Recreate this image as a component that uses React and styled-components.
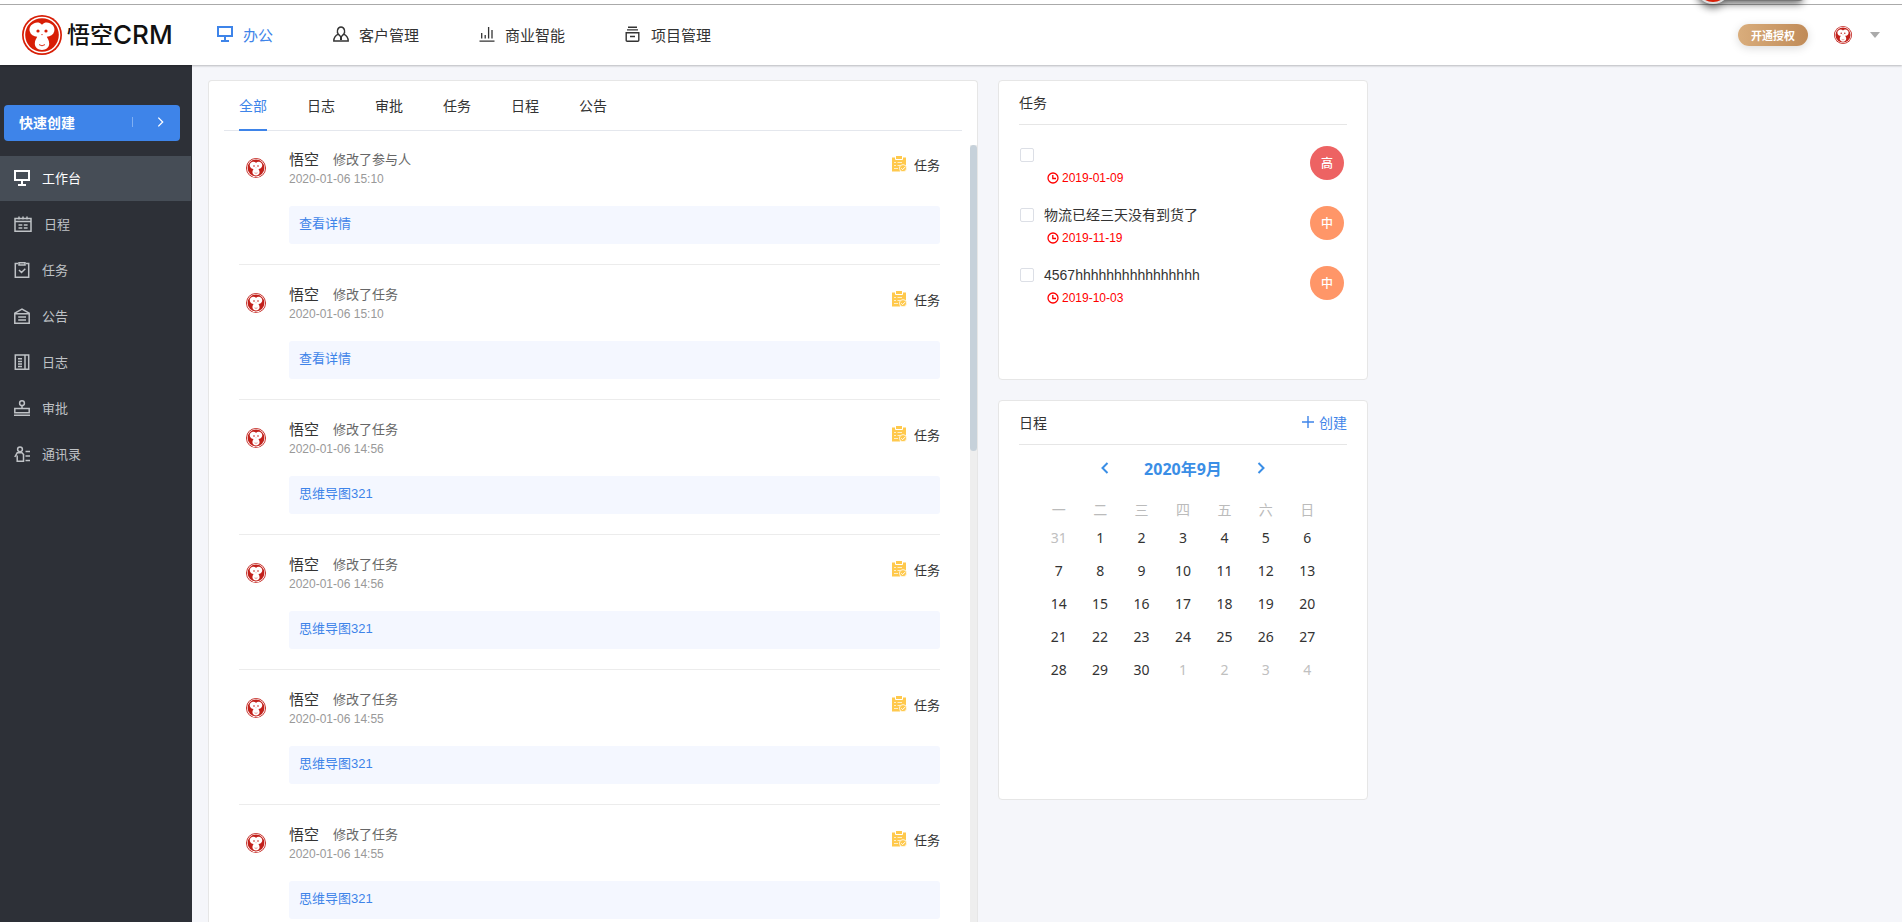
import React, { useState } from 'react';
import styled, { createGlobalStyle } from 'styled-components';

const colors = {
	primary: '#3e84e9',
	dark: '#2d3037',
	active: '#464d56',
	text: '#333',
	sub: '#666',
	muted: '#999',
	line: '#e6e6e6',
	page: '#f5f6fa',
	white: '#fff'
};

const fs = {
	xs: '12px',
	sm: '13px',
	md: '14px',
	lg: '15px',
	xl: '16px'
};

const GlobalStyle = createGlobalStyle`
	*{
		box-sizing: border-box;
		margin: 0;
		padding: 0;
	}
	body{
		background: ${colors.page};
		color: ${colors.text};
		font-family: "Liberation Sans", "Noto Sans CJK SC", sans-serif;
		font-size: ${fs.md};
	}
	button{
		border: none;
		background: none;
		font: inherit;
		color: inherit;
		cursor: pointer;
	}
	a{
		color: inherit;
		text-decoration: none;
	}
	svg{
		display: block;
		flex: none;
	}
`

const Page = styled.div`
	display: flex;
	flex-direction: column;
	height: 100vh;
	overflow: hidden;
`

const Header = styled.header`
	position: relative;
	z-index: 1;
	flex: none;
	display: flex;
	align-items: center;
	height: 61px;
	margin-top: 4px;
	padding: 0 22px;
	background: ${colors.white};
	border-top: 1px solid #aaa;
	box-shadow: 0 -4px 0 ${colors.white}, 0 1px 2px rgba(0, 0, 0, 0.25);
`

const Logo = styled.a`
	display: flex;
	align-items: center;
	width: 195px;
	color: #111;
	line-height: 30px;
	.cn{
		margin-left: 5px;
		font-size: 23px;
		font-weight: 500;
	}
	.en{
		font-family: Inter, "Liberation Sans", sans-serif;
		font-size: 26px;
		font-weight: 500;
	}
`

const TopNav = styled.nav`
	flex: 1;
	display: flex;
	gap: 60px;
	padding-bottom: 2px;
`

const TopLink = styled.a`
	display: flex;
	align-items: center;
	gap: 10px;
	font-size: ${fs.lg};
	color: ${props => props.$active ? colors.primary : colors.text};
	white-space: nowrap;
`

const UserArea = styled.div`
	display: flex;
	align-items: center;
`

const Badge = styled.button`
	width: 70px;
	height: 22px;
	margin-right: 26px;
	border-radius: 11px;
	background: linear-gradient(90deg, #d9ad7c, #c08b58);
	box-shadow: 0 2px 10px rgba(0, 0, 0, 0.15);
	color: ${colors.white};
	font-size: 11px;
	font-weight: bold;
`

const UserMenu = styled.button`
	display: flex;
	align-items: center;
	gap: 18px;
`

const Floating = styled.svg`
	position: absolute;
	top: -5px;
	right: 72px;
`

const Body = styled.div`
	flex: 1;
	display: flex;
	min-height: 0;
`

const SideBar = styled.aside`
	flex: none;
	width: 192px;
	padding-top: 40px;
	background: ${colors.dark};
`

const QuickCreate = styled.button`
	display: flex;
	align-items: center;
	width: 176px;
	height: 36px;
	margin: 0 4px 15px;
	padding: 0 16px 2px 15px;
	border-radius: 4px;
	background: ${colors.primary};
	color: ${colors.white};
	font-weight: bold;
	.label{
		flex: 1;
		text-align: left;
	}
	.split{
		width: 1px;
		height: 10px;
		margin-right: 24px;
		background: #7faff3;
	}
`

const SideLink = styled.a`
	display: flex;
	align-items: center;
	gap: 12px;
	height: 45px;
	margin: 0 1px 1px 0;
	padding: 0 0 2px 14px;
	background: ${props => props.$active ? colors.active : 'transparent'};
	color: ${props => props.$active ? colors.white : '#bfc2c6'};
	font-size: ${fs.sm};
`

const Main = styled.main`
	flex: 1;
	display: grid;
	grid-template-columns: minmax(0, 770px) minmax(0, 370px);
	gap: 20px;
	min-width: 0;
	padding: 15px 15px 0 16px;
`

const Card = styled.section`
	min-height: ${props => props.$tall ? '400px' : '300px'};
	padding: 0 20px;
	background: ${colors.white};
	border: 1px solid ${colors.line};
	border-radius: 4px;
`

const FeedCard = styled.section`
	display: flex;
	flex-direction: column;
	min-height: 0;
	overflow: hidden;
	background: ${colors.white};
	border: 1px solid ${colors.line};
	border-bottom: none;
	border-radius: 4px 4px 0 0;
`

const Tabs = styled.div`
	flex: none;
	display: flex;
	gap: 40px;
	height: 50px;
	margin: 0 15px 14px;
	padding: 0 15px;
	border-bottom: 1px solid #e4e7ed;
`

const Tab = styled.button`
	height: 50px;
	border-bottom: 2px solid ${props => props.$active ? colors.primary : 'transparent'};
	color: ${props => props.$active ? colors.primary : colors.text};
`

const Scroller = styled.div`
	flex: 1;
	display: flex;
	min-height: 0;
`

const FeedList = styled.ul`
	flex: 1;
	min-width: 0;
	padding: 0 30px;
	list-style: none;
	overflow: hidden;
`

const Track = styled.div`
	width: 7px;
	background: #eee;
	.thumb{
		height: 306px;
		border-radius: 4px;
		background: #c6d1da;
	}
`

const FeedItem = styled.li`
	height: 135px;
	padding: 4px 0 0 7px;
	.head{
		display: flex;
		height: 42px;
	}
	.avatar{
		width: 43px;
		padding-top: 9px;
	}
	.who{
		flex: 1;
	}
	.line{
		display: flex;
		align-items: center;
		gap: 14px;
		height: 18px;
	}
	.name{
		font-size: ${fs.lg};
		color: ${colors.text};
	}
	.action{
		font-size: ${fs.sm};
		color: ${colors.sub};
	}
	time{
		display: block;
		font-size: ${fs.xs};
		line-height: 24px;
		color: ${colors.muted};
	}
	.kind{
		display: flex;
		align-items: center;
		gap: 7px;
		height: 30px;
		font-size: ${fs.sm};
	}
`

const Detail = styled.a`
	display: block;
	height: 38px;
	margin: 15px 0 20px 43px;
	padding: 0 10px;
	border-radius: 3px;
	background: #f4f7ff;
	color: ${colors.primary};
	font-size: ${fs.sm};
	line-height: 36px;
`

const Divider = styled.hr`
	margin-left: -7px;
	border: none;
	border-top: 1px solid #ececec;
`

const SideColumn = styled.div`
	display: flex;
	flex-direction: column;
	gap: 20px;
`

const CardHead = styled.header`
	display: flex;
	align-items: center;
	justify-content: space-between;
	height: 44px;
	padding-bottom: 2px;
	border-bottom: 1px solid ${colors.line};
	h2{
		font-size: ${fs.md};
		font-weight: normal;
	}
	button{
		display: flex;
		align-items: center;
		gap: 5px;
		color: ${colors.primary};
	}
`

const TaskList = styled.ul`
	padding-top: 12px;
	list-style: none;
`

const TaskRow = styled.li`
	display: flex;
	align-items: flex-start;
	height: 60px;
	padding: 9px 3px 0 1px;
	input{
		appearance: none;
		width: 14px;
		height: 14px;
		margin-top: 2px;
		border: 1px solid #dcdfe6;
		border-radius: 2px;
		background: ${colors.white};
	}
	input:checked{
		background: ${colors.primary};
	}
	.content{
		flex: 1;
		padding-left: 10px;
	}
	label{
		display: block;
		height: 20px;
		line-height: 18px;
	}
	.due{
		display: flex;
		align-items: center;
		gap: 3px;
		height: 24px;
		padding-left: 3px;
		color: #f00;
		font-size: ${fs.xs};
	}
`

const Level = styled.span`
	display: flex;
	align-items: center;
	justify-content: center;
	width: 34px;
	height: 34px;
	padding-bottom: 2px;
	border-radius: 50%;
	background: ${props => props.$high ? '#ed6363' : '#ff9668'};
	color: ${colors.white};
	font-size: ${fs.xs};
	font-weight: 500;
`

const MonthNav = styled.div`
	display: flex;
	align-items: center;
	justify-content: center;
	gap: 35px;
	height: 46px;
	color: #3a8ee6;
	font-family: "Noto Sans", "Noto Sans CJK SC", sans-serif;
	font-size: ${fs.xl};
	font-weight: bold;
`

const Calendar = styled.table`
	width: 290px;
	max-width: 100%;
	margin: 2px auto 0;
	border-collapse: collapse;
	table-layout: fixed;
	text-align: center;
	font-family: "Noto Sans", "Noto Sans CJK SC", sans-serif;
	font-size: ${fs.md};
	th{
		height: 28px;
		padding-top: 4px;
		color: #bbb;
		font-weight: normal;
	}
	td{
		height: 33px;
	}
	.other{
		color: #c0c0c0;
	}
`

const Monkey = ({ size, color = '#d81e06' }) => (
	<svg width={size} height={size} viewBox="0 0 40 40" aria-hidden="true">
		<circle cx="20" cy="20" r="20" fill={color} />
		<circle cx="20" cy="20" r="18.3" fill="#fff" />
		<circle cx="20" cy="20" r="16.8" fill={color} />
		<path d="M20 9.8C17.8 7.3 14.8 7.2 12.2 8.2C8.5 9.7 6.8 13 7.8 16.6C8.7 20 11.6 21.7 15.2 21.8C14.6 23.2 12.8 25.4 12.8 28.6C12.8 32.6 16 35 20 35C24 35 27.2 32.6 27.2 28.6C27.2 25.4 25.4 23.2 24.8 21.8C28.4 21.7 31.3 20 32.2 16.6C33.2 13 31.5 9.7 27.8 8.2C25.2 7.2 22.2 7.3 20 9.8Z" fill="#fff" />
		<circle cx="16" cy="16" r="1.6" fill={color} />
		<circle cx="24" cy="16" r="1.6" fill={color} />
		<circle cx="20" cy="19.6" r="0.7" fill={color} />
		<path d="M17 29.6Q20 32 23 29.6" fill="none" stroke={color} strokeWidth="0.9" />
	</svg>
)

const Line = ({ w = 16, sw = 1.5, children }) => (
	<svg width={w} height="16" viewBox={`0 0 ${w} 16`} fill="none" stroke="currentColor" strokeWidth={sw} aria-hidden="true">
		{children}
	</svg>
)

const icons = {
	screen: (
		<Line sw={2}><path d="M1 1H15V10H1ZM8 10V15M4 15H12" /></Line>
	),
	customer: (
		<Line sw={1.4}>
			<path d="M5.4 8.2C3.6 6.8 4 1 8 1S12.4 6.8 10.6 8.2C13.5 9.5 15.2 11 15.2 15H0.8C0.8 11 2.5 9.5 5.4 8.2ZM5.6 8.6L8 11L10.4 8.6" />
			<path d="M8 10.5V14" strokeWidth="2" />
		</Line>
	),
	chart: (
		<Line sw={1.3}><path d="M0.5 15.2H15.5M2.7 7V12.5M6.2 9V12.5M9.6 1V12.5M13 4V12.5" /></Line>
	),
	project: (
		<Line sw={1.4}><path d="M3 1.2H12M2 3.9H13M1.2 6.7H13.8V14.2Q13.8 15.2 12.8 15.2H2.2Q1.2 15.2 1.2 14.2ZM5 10.5H10" /></Line>
	),
	calendar: (
		<Line w={18}><path d="M1 2.5H17V15.2H1ZM1 5.5H17M5 0.5V3.5M9 0.5V3.5M13 0.5V3.5M4.5 9H8.3M9.8 9H13.6M4.5 12H8.3M9.8 12H13.6" /></Line>
	),
	task: (
		<Line><path d="M4 1.5H1.3V15.2H14.7V1.5H12M5 0.7H11V3H5ZM5 8L7.5 10.5L11.3 6.8" /></Line>
	),
	notice: (
		<Line><path d="M0.8 5.2L8 1L15.2 5.2V15.2H0.8ZM1 5.8H15M4.2 9H12M4.2 12H12" /></Line>
	),
	log: (
		<Line><path d="M1.3 1H14.7V15.2H1.3ZM11 1V15M4 4.8H8M4 7.4H8M4 10H8M4 12.5H8" /></Line>
	),
	approve: (
		<Line><path d="M0.8 8.5H15.2V12.7H0.8ZM0 15.2H16M8 5.5V8.5" /><circle cx="8" cy="3.2" r="2.4" /></Line>
	),
	contacts: (
		<Line><path d="M0.8 11L3.2 6.8H8L10 9M3.2 9.5V15.2H9.5V8M11.5 5.5H16M11.5 10H16M11.5 14.5H16" /><circle cx="6" cy="3.3" r="2.4" /></Line>
	)
};

const Arrow = ({ left, w = 8, h = 12, sw = 2 }) => (
	<svg width={w} height={h} viewBox="0 0 8 12" fill="none" stroke="currentColor" strokeWidth={sw} aria-hidden="true">
		<path d={left ? 'M6.5 1L1.5 6L6.5 11' : 'M1.5 1L6.5 6L1.5 11'} />
	</svg>
)

const TaskIcon = () => (
	<svg width="15" height="16" viewBox="0 0 15 16" aria-hidden="true">
		<path d="M0 1.5H14V10H8V15.5H0Z" fill="#ffc94d" />
		<path d="M3.5 0.5V3.5H10.5V0.5" fill="none" stroke="#fff" />
		<path d="M4 0H10V3H4Z" fill="#ffc94d" />
		<path d="M2 6.5H4M5.5 6.5H10M2 9.5H4M5.5 9.5H8M2 12.5H6" stroke="#ffefc8" />
		<circle cx="11" cy="12.2" r="3.6" fill="#ffc94d" stroke="#fff" strokeWidth="0.8" />
		<path d="M9.3 12.3L10.7 13.6L12.9 11.2" fill="none" stroke="#fff" />
	</svg>
)

const Clock = () => (
	<svg width="12" height="12" viewBox="0 0 12 12" fill="none" stroke="currentColor" strokeWidth="1.3" aria-hidden="true">
		<circle cx="6" cy="6" r="5" />
		<path d="M5.8 3V6.5H9" />
	</svg>
)

const topLinks = [
	{ label: '办公', icon: 'screen' },
	{ label: '客户管理', icon: 'customer' },
	{ label: '商业智能', icon: 'chart' },
	{ label: '项目管理', icon: 'project' }
];

const sideLinks = [
	{ label: '工作台', icon: 'screen' },
	{ label: '日程', icon: 'calendar' },
	{ label: '任务', icon: 'task' },
	{ label: '公告', icon: 'notice' },
	{ label: '日志', icon: 'log' },
	{ label: '审批', icon: 'approve' },
	{ label: '通讯录', icon: 'contacts' }
];

const tabs = ['全部', '日志', '审批', '任务', '日程', '公告'];

const feed = [
	{ action: '修改了参与人', time: '2020-01-06 15:10', detail: '查看详情' },
	{ action: '修改了任务', time: '2020-01-06 15:10', detail: '查看详情' },
	{ action: '修改了任务', time: '2020-01-06 14:56', detail: '思维导图321' },
	{ action: '修改了任务', time: '2020-01-06 14:56', detail: '思维导图321' },
	{ action: '修改了任务', time: '2020-01-06 14:55', detail: '思维导图321' },
	{ action: '修改了任务', time: '2020-01-06 14:55', detail: '思维导图321' }
];

const tasks = [
	{ title: '', due: '2019-01-09', level: '高' },
	{ title: '物流已经三天没有到货了', due: '2019-11-19', level: '中' },
	{ title: '4567hhhhhhhhhhhhhhhh', due: '2019-10-03', level: '中' }
];

const weekDays = ['一', '二', '三', '四', '五', '六', '日'];

// September 2020, weeks start on Monday
const weeks = [0, 1, 2, 3, 4].map(week =>
	weekDays.map((_, day) => {
		const n = week * 7 + day;
		if (n < 1) return { day: 31, other: true };
		if (n > 30) return { day: n - 30, other: true };
		return { day: n };
	})
);

const TopBar = () => (
	<Header>
		<Logo href="#">
			<Monkey size={40} />
			<span className="cn">悟空</span>
			<span className="en">CRM</span>
		</Logo>
		<TopNav>
			{
				topLinks.map((item, index) =>
					<TopLink key={item.label} href="#" $active={index === 0}>
						{icons[item.icon]}
						{item.label}
					</TopLink>
				)
			}
		</TopNav>
		<UserArea>
			<Badge>开通授权</Badge>
			<UserMenu aria-label="用户菜单">
				<Monkey size={18} color="#c2211b" />
				<svg width="10" height="6" viewBox="0 0 10 6" aria-hidden="true">
					<path d="M0 0H10L5 6Z" fill="#aaa" />
				</svg>
			</UserMenu>
		</UserArea>
		<Floating width="140" height="20" viewBox="0 0 140 20" aria-hidden="true">
			<defs>
				<filter id="soft" x="-20%" y="-200%" width="140%" height="500%">
					<feGaussianBlur stdDeviation="4" />
				</filter>
			</defs>
			<g filter="url(#soft)" opacity="0.7">
				<circle cx="23" cy="-9" r="16" />
				<path d="M22 -6H112V3H22Z" />
			</g>
			<path d="M30 -4H118Q114 1 108 1H30Z" fill="#777" />
			<circle cx="23" cy="-14" r="18" fill="#ddd" />
			<circle cx="23" cy="-14" r="16" fill="#d81e06" />
		</Floating>
	</Header>
)

const FeedEntry = ({ item }) => (
	<FeedItem>
		<div className="head">
			<div className="avatar"><Monkey size={20} color="#c2211b" /></div>
			<div className="who">
				<p className="line">
					<span className="name">悟空</span>
					<span className="action">{item.action}</span>
				</p>
				<time>{item.time}</time>
			</div>
			<div className="kind"><TaskIcon />任务</div>
		</div>
		<Detail href="#">{item.detail}</Detail>
		<Divider />
	</FeedItem>
)

const TaskCard = () => (
	<Card>
		<CardHead><h2>任务</h2></CardHead>
		<TaskList>
			{
				tasks.map((task, index) =>
					<TaskRow key={task.due}>
						<input type="checkbox" id={`task-${index}`} aria-label={task.title || task.due} />
						<div className="content">
							<label htmlFor={`task-${index}`}>{task.title}</label>
							<p className="due"><Clock />{task.due}</p>
						</div>
						<Level $high={task.level === '高'}>{task.level}</Level>
					</TaskRow>
				)
			}
		</TaskList>
	</Card>
)

const ScheduleCard = () => (
	<Card $tall>
		<CardHead>
			<h2>日程</h2>
			<button>
				<svg width="12" height="12" viewBox="0 0 12 12" stroke="currentColor" strokeWidth="1.4" aria-hidden="true">
					<path d="M6 0V12M0 6H12" />
				</svg>
				创建
			</button>
		</CardHead>
		<MonthNav>
			<button aria-label="上个月"><Arrow left /></button>
			<span>2020年9月</span>
			<button aria-label="下个月"><Arrow /></button>
		</MonthNav>
		<Calendar>
			<thead>
				<tr>{weekDays.map(day => <th key={day}>{day}</th>)}</tr>
			</thead>
			<tbody>
				{
					weeks.map((week, index) =>
						<tr key={index}>
							{week.map(({ day, other }) => <td key={day} className={other ? 'other' : undefined}>{day}</td>)}
						</tr>
					)
				}
			</tbody>
		</Calendar>
	</Card>
)

const App = () => {
	const [tab, setTab] = useState('全部');

	return (
		<Page>
			<GlobalStyle />
			<TopBar />
			<Body>
				<SideBar>
					<QuickCreate>
						<span className="label">快速创建</span>
						<span className="split" />
						<Arrow w={7} h={12} sw={1.5} />
					</QuickCreate>
					<nav>
						{
							sideLinks.map((item, index) =>
								<SideLink key={item.label} href="#" $active={index === 0}>
									{icons[item.icon]}
									{item.label}
								</SideLink>
							)
						}
					</nav>
				</SideBar>
				<Main>
					<FeedCard>
						<Tabs>
							{
								tabs.map(name =>
									<Tab key={name} $active={name === tab} onClick={() => setTab(name)}>{name}</Tab>
								)
							}
						</Tabs>
						<Scroller>
							<FeedList>
								{feed.map((item, index) => <FeedEntry key={index} item={item} />)}
							</FeedList>
							<Track><div className="thumb" /></Track>
						</Scroller>
					</FeedCard>
					<SideColumn>
						<TaskCard />
						<ScheduleCard />
					</SideColumn>
				</Main>
			</Body>
		</Page>
	);
}

export default App;
